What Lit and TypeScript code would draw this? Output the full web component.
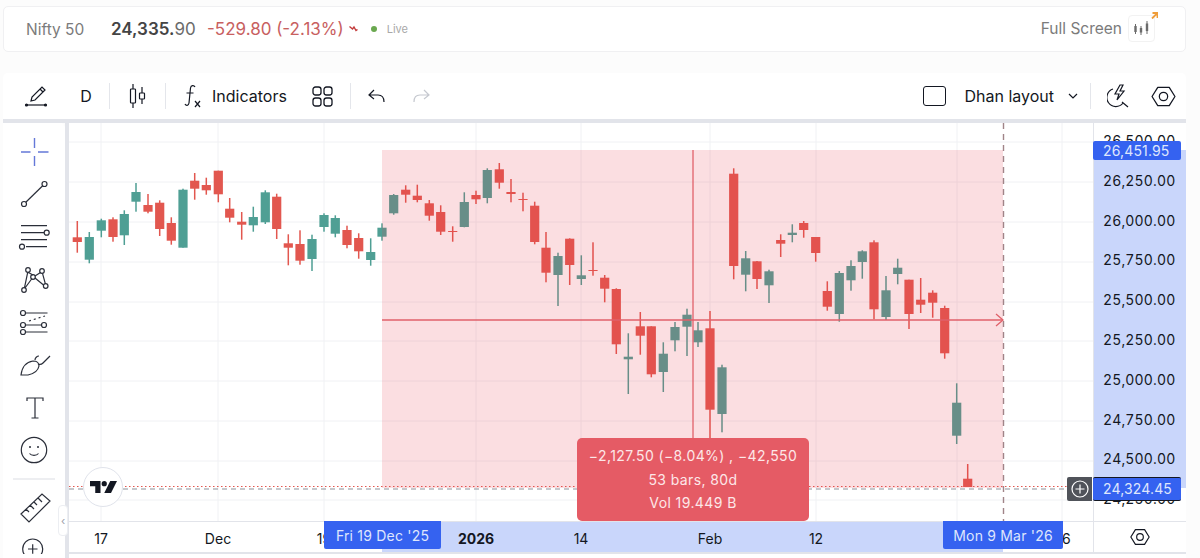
import { LitElement, html, css, svg } from "lit";
import { customElement } from "lit/decorators.js";

// x, wick top, wick bottom, body top, body bottom, green?
const CANDLES: [number, number, number, number, number, number][] = [
  [77.3, 221, 252.7, 237.3, 242, 0], [89.3, 232, 263.3, 237, 259.7, 1], [101.3, 218.7, 237.3, 220.3, 230.7, 1],
  [113, 217.3, 241.7, 219.3, 237, 0], [124.3, 210.3, 245, 214, 235.3, 1], [136, 183, 211.7, 192, 201.7, 1],
  [148, 194, 213.3, 205, 211.7, 0], [159.7, 200.3, 236, 202.7, 229, 0], [171.3, 217.3, 244.7, 223, 240.7, 0],
  [183, 188.7, 247.7, 189.7, 247.7, 1], [194.7, 173, 199.7, 180.7, 188.7, 0], [206.3, 177.7, 194.7, 185, 190.3, 0],
  [218.3, 170.7, 202.3, 170.7, 194.3, 0], [229.7, 198, 222.3, 208.7, 217.7, 0], [241.7, 212, 239.7, 221.7, 224.7, 0],
  [253.3, 206.7, 231.7, 217, 225.3, 1], [265.3, 190.3, 224, 192.3, 222.3, 1], [276.7, 193.7, 239, 196.7, 229, 0],
  [288.3, 234.3, 265.3, 243.3, 247.7, 0], [300, 230.3, 264.7, 244, 260.7, 0], [312, 234.7, 271, 239, 259, 1],
  [324, 213.3, 231.7, 215, 227, 1], [335.3, 215.3, 237.3, 218, 233.7, 1], [347, 225.7, 248.3, 230, 245, 0],
  [358.7, 233.3, 258.7, 238, 251.3, 0], [370.7, 238.3, 265.7, 252, 260, 1], [382, 223.3, 240.7, 227.7, 236.7, 1],
  [393.7, 194, 214.7, 195, 213.3, 1], [405.7, 185.3, 202.7, 189.7, 194.7, 0], [417.3, 184.7, 202.3, 195.7, 200, 0],
  [429.3, 200, 220.7, 203.3, 215.7, 0], [440.7, 205.3, 235, 212, 231.7, 0], [452.7, 226.3, 241.7, 231, 232, 0],
  [464.3, 192.3, 227.3, 202, 227, 1], [476, 190.7, 204, 195, 199.3, 0], [487.3, 168.3, 203.3, 170, 198, 1],
  [499.3, 163, 188.7, 169.3, 182.7, 0], [511, 179, 202.3, 192, 194, 0], [523, 192.7, 211.3, 199, 199.7, 0],
  [534.7, 201.7, 244.3, 205.7, 242, 0], [546, 232, 282.3, 247.7, 272.7, 0], [558, 252.7, 306, 256, 275, 1],
  [569.7, 238.3, 285, 238.7, 265, 0], [581.3, 255.3, 285, 275.3, 279, 1], [593, 242.3, 275.7, 270, 271, 0],
  [604.7, 275, 302.3, 277.7, 288.7, 0], [616.3, 288.3, 354, 289, 344.3, 0], [628.3, 333.3, 394, 356.7, 359.3, 1],
  [640.3, 312, 354.7, 326.3, 335.7, 0], [651.3, 326.3, 377.3, 326.3, 374.3, 0], [663.3, 342.3, 392, 353.7, 372, 1],
  [675, 322, 351.3, 327, 340.3, 1], [687, 308.7, 356, 314.7, 326.7, 1], [698, 322, 347, 330.3, 342.3, 1],
  [710, 311, 438, 328.3, 409.7, 0], [722, 364.7, 432.3, 367.3, 414, 1], [733.7, 168.3, 279.3, 173.7, 266, 0],
  [745.7, 251, 291.3, 258.3, 274.7, 1], [757, 261, 289, 261.3, 279, 0], [769, 269.7, 303, 271.3, 285.3, 1],
  [780.7, 234.3, 257, 240, 243.7, 0], [792.3, 224.3, 242.3, 232.7, 235, 1], [803.7, 221, 237.7, 223, 230, 0],
  [815.7, 237, 261.7, 237, 253, 0], [827.3, 281.3, 310.7, 291, 306.7, 0], [839.3, 271, 321.7, 273, 314, 1],
  [851, 260.3, 290.7, 266, 280.3, 1], [862.3, 250.3, 278.7, 251.3, 262, 1], [874, 240.3, 319.3, 242.3, 309.3, 0],
  [886, 276, 320, 290.3, 317, 1], [897.7, 258.7, 284.3, 267.7, 274, 1], [909, 279.7, 329, 279.7, 314, 0],
  [920.7, 278, 313, 299.7, 304.7, 0], [932.7, 290.3, 317.7, 292.7, 302.7, 0], [944.7, 305.7, 358.7, 308, 353.3, 0],
  [956.7, 383.3, 444, 402.7, 435.7, 1], [967.7, 464, 487, 478.7, 487, 0],
];

const GRID_X = [101, 218, 324, 476, 581, 710, 816, 957, 1062];
const GRID_Y = [142, 182, 222, 262, 302, 341, 381, 421, 461, 500];
const PRICES = ["26,500.00", "26,250.00", "26,000.00", "25,750.00", "25,500.00", "25,250.00", "25,000.00", "24,750.00", "24,500.00", "24,250.00"];
const TICKS: [number, string, boolean][] = [
  [101, "17", false], [218, "Dec", false], [324, "19", false], [476, "2026", true],
  [581, "14", false], [710, "Feb", false], [816, "12", false], [1062, "26", false],
];

const hexagon = (size: number, sw: number) => html`
  <svg width=${size} height=${size} viewBox="0 0 24 24" fill="none" stroke="#131722" stroke-width=${sw}>
    <path d="M6.5 3.2h11L23 12l-5.5 8.8h-11L1 12z" stroke-linejoin="round" />
    <circle cx="12" cy="12" r="4" />
  </svg>
`;

@customElement("app-root")
export class AppRoot extends LitElement {
  static styles = css`
    :host {
      display: block;
      width: 1200px;
      height: 558px;
      overflow: hidden;
      background: #fcfcfc;
      font-family: Inter, "Liberation Sans", sans-serif;
      color: #131722;
    }
    svg {
      display: block;
    }

    .quote {
      display: flex;
      align-items: center;
      box-sizing: border-box;
      height: 46px;
      margin: 6px 14px 0 3px;
      padding: 0 30px 0 22px;
      background: #fff;
      border: 1px solid #f0f0f2;
      border-radius: 5px;
    }
    .name {
      width: 85px;
      font-size: 15.500px;
      color: #7b7b7b;
    }
    .last {
      width: 96px;
      font-size: 17px;
      color: #6b6b6b;
    }
    .last b {
      font-weight: 600;
      color: #444;
    }
    .change {
      font-size: 17px;
      color: #c8605f;
    }
    .trend {
      margin: 0 12px 0 5px;
    }
    .dot {
      width: 6px;
      height: 6px;
      border-radius: 50%;
      background: #6aa84f;
      margin-right: 10px;
    }
    .live {
      font-size: 11px;
      color: #a8a8a8;
    }
    .full {
      margin-left: auto;
      margin-bottom: 2px;
      display: flex;
      align-items: center;
      gap: 6px;
      font-size: 15.500px;
      color: #7b7b7b;
    }
    .full-icon {
      position: relative;
      display: flex;
      align-items: center;
      justify-content: center;
      box-sizing: border-box;
      width: 27px;
      height: 27px;
      border: 1px solid #f2f2f2;
      border-radius: 4px;
    }
    .full-arrow {
      position: absolute;
      top: -4px;
      right: -4px;
    }

    .toolbar {
      display: flex;
      align-items: center;
      box-sizing: border-box;
      height: 46px;
      margin: 21px 14px 0 3px;
      background: #fff;
      border-radius: 5px 5px 0 0;
    }
    .tool {
      display: flex;
      align-items: center;
      justify-content: center;
      flex: none;
    }
    .sep {
      flex: none;
      width: 1px;
      height: 26px;
      background: #e4e6eb;
    }
    .interval {
      width: 18px;
      font-size: 16px;
      text-align: center;
    }
    .label {
      font-size: 16px;
    }
    .square {
      box-sizing: border-box;
      width: 23px;
      height: 20px;
      border: 1.300px solid #131722;
      border-radius: 3px;
      margin-left: auto;
    }

    .workspace {
      display: flex;
      height: 435px;
      margin: 0 14px 0 3px;
      border-top: 4px solid #e2e4ea;
    }
    .rail {
      flex: none;
      position: relative;
      width: 62px;
      background: #fff;
      border-radius: 0 5px 0 0;
    }
    .handle {
      position: absolute;
      left: 55px;
      top: 382px;
      display: flex;
      align-items: center;
      justify-content: center;
      box-sizing: border-box;
      width: 10px;
      height: 31px;
      background: #fff;
      border: 1px solid #eceef2;
      border-radius: 4px;
      font-size: 11px;
      color: #9a9ea8;
      z-index: 2;
    }
    .gutter {
      flex: none;
      width: 4px;
      background: #e2e4ea;
    }
    .chart {
      flex: 1;
      display: grid;
      grid-template-columns: 1024px 93px;
      grid-template-rows: 398px 33px;
      position: relative;
      background: #fff;
    }
    .plot {
      position: relative;
      overflow: hidden;
    }
    .brand {
      position: absolute;
      left: 14px;
      top: 344px;
      display: flex;
      align-items: center;
      justify-content: center;
      box-sizing: border-box;
      width: 40px;
      height: 40px;
      background: #fff;
      border: 1px solid #e0e3eb;
      border-radius: 50%;
    }
    .prices {
      position: relative;
      border-left: 1px solid #e2e4ea;
      overflow: visible;
    }
    .prices-range {
      position: absolute;
      left: 0;
      right: 0;
      top: 27px;
      height: 338px;
      background: #c9d6fb;
    }
    .price {
      position: absolute;
      left: 9px;
      font-size: 14px;
      line-height: 20px;
      letter-spacing: 0.150px;
      font-variant-numeric: tabular-nums;
    }
    .times {
      position: relative;
      border-top: 1px solid #e2e4ea;
      border-bottom: 2px solid #e2e4ea;
      overflow: hidden;
    }
    .times-range {
      position: absolute;
      left: 313px;
      width: 621px;
      top: 0;
      bottom: 0;
      background: #c9d6fb;
    }
    .tick {
      position: absolute;
      top: 0;
      width: 60px;
      margin-left: -30px;
      text-align: center;
      font-size: 14px;
      line-height: 33px;
    }
    .tick.bold {
      font-weight: 700;
    }
    .corner {
      display: flex;
      align-items: center;
      justify-content: center;
      border-top: 1px solid #e2e4ea;
      border-bottom: 2px solid #e2e4ea;
      border-left: 1px solid #e2e4ea;
    }

    .date-tag {
      position: absolute;
      top: 398px;
      height: 28px;
      display: flex;
      align-items: center;
      justify-content: center;
      background: #3562f0;
      color: #dfe6fd;
      font-size: 14px;
      letter-spacing: 0.200px;
      border-radius: 0 0 2px 2px;
    }
    .price-tag {
      position: absolute;
      left: 1024px;
      width: 88px;
      box-sizing: border-box;
      padding-left: 10px;
      background: #3562f0;
      color: #dfe6fd;
      font-size: 14px;
      letter-spacing: 0.150px;
      border-radius: 2px;
    }
    .tag-top {
      top: 18px;
      height: 19px;
      line-height: 19px;
    }
    .tag-last {
      top: 354px;
      height: 24px;
      line-height: 22px;
      border-top: 1.500px solid #131722;
      border-bottom: 1.500px solid #131722;
    }
    .plus {
      position: absolute;
      left: 998px;
      top: 354px;
      width: 25px;
      height: 24px;
      display: flex;
      align-items: center;
      justify-content: center;
      background: #50535a;
      border-radius: 2px 0 0 2px;
    }
    .tip {
      position: absolute;
      left: 508px;
      top: 315px;
      width: 232px;
      height: 83px;
      display: flex;
      flex-direction: column;
      align-items: center;
      justify-content: center;
      gap: 3.500px;
      background: #e55b65;
      color: #fde7e8;
      border-radius: 5px;
      font-size: 14px;
      line-height: 20px;
      letter-spacing: 0.400px;
    }
  `;

  private renderCandles() {
    return CANDLES.map(([x, wt, wb, bt, bb, up]) => {
      const color = up ? "#4f9f94" : "#e2574f";
      return svg`
        <rect x=${x - 0.75} y=${wt} width="1.5" height=${wb - wt} fill=${color} />
        <rect x=${x - 4.6} y=${bt} width="9.2" height=${Math.max(bb - bt, 1)} fill=${color} />
      `;
    });
  }

  private renderPlot() {
    return html`
      <svg width="1024" height="398" viewBox="69 123 1024 398">
        ${GRID_X.map((x) => svg`<line x1=${x} x2=${x} y1="123" y2="521" stroke="#f0f1f4" />`)}
        ${GRID_Y.map((y) => svg`<line x1="69" x2="1093" y1=${y} y2=${y} stroke="#f0f1f4" />`)}
        ${this.renderCandles()}
        <line x1="69" x2="1067" y1="489" y2="489" stroke="#8d9199" stroke-dasharray="5 4" />
        <line x1="69" x2="1067" y1="486.5" y2="486.5" stroke="#e2574f" stroke-dasharray="1.5 2.5" />
        <rect x="382" y="150" width="621" height="338" fill="rgb(234,60,75)" fill-opacity="0.17" />
        <line x1="1003.5" x2="1003.5" y1="123" y2="521" stroke="#a08488" stroke-width="1.4" stroke-dasharray="6 5" />
        <line x1="693" x2="693" y1="150" y2="438" stroke="#e0616a" stroke-width="1.3" />
        <line x1="382" x2="1003" y1="320" y2="320" stroke="#e0616a" stroke-width="1.3" />
        <path d="M996 314l7 6-7 6" fill="none" stroke="#e0616a" stroke-width="1.3" />
      </svg>
      <div class="brand">
        <svg width="27" height="14" viewBox="0 0 36 18" fill="#131722">
          <path d="M0 1h14v16H7V8H0z" />
          <circle cx="19" cy="4.5" r="3.5" />
          <path d="M27 1h9l-8 16h-9z" />
        </svg>
      </div>
    `;
  }

  private renderRail() {
    return html`
      <div class="rail">
        <svg width="62" height="431" viewBox="0 123 62 431" fill="none" stroke="#2a2e39" stroke-width="1.2">
          <path d="M21 152h9.500M38 152h10.500M34.500 138v10M34.500 156v10" stroke="#6478d8" stroke-width="1.4" transform="translate(-3 0)" />
          <circle cx="21" cy="204" r="2.500" />
          <circle cx="41.500" cy="184" r="2.500" />
          <path d="M22.800 202.200L39.700 185.800" />
          <path d="M18 225.700h26M18 232.700h23M18 239.700h26M23 246.700h21" />
          <circle cx="43.700" cy="232.700" r="2.500" />
          <circle cx="19" cy="246.700" r="2.500" />
          <circle cx="25" cy="270" r="2.300" />
          <circle cx="39" cy="271" r="2.300" />
          <circle cx="30" cy="277" r="2.300" />
          <circle cx="21" cy="290" r="2.300" />
          <circle cx="42.700" cy="286" r="2.300" />
          <path d="M25 272.300L30 275M24.700 272.300L21.500 287.700M22 288L29 278.500M32 276L37.500 272.500M39.500 273.300L42.300 283.700M32 278L40.500 285" />
          <circle cx="20" cy="313" r="2.500" />
          <circle cx="20" cy="325" r="2.500" />
          <circle cx="41" cy="325" r="2.500" />
          <circle cx="20" cy="332" r="2.500" />
          <path d="M22.500 313h22M22.500 325h16M22.500 332h22" />
          <path d="M26 321l16-5" stroke-dasharray="2 3" />
          <path d="M18 375c1-8 5-13 12-14 4 0 6 2 6 5-1 5-6 8-11 9zM35 364c2 1 4 0 5-1l7-7M32 360c0-2 2-4 4-4" />
          <path d="M24 401v-3h16v3M32 398v20M28.500 418h7" />
          <circle cx="31" cy="450" r="12.700" />
          <circle cx="27" cy="447" r="1" fill="#2a2e39" stroke="none" />
          <circle cx="35" cy="447" r="1" fill="#2a2e39" stroke="none" />
          <path d="M26.500 453.500c2 2.500 7 2.500 9 0" />
          <path d="M10 479h42" stroke="#dcdee4" />
          <path d="M18 514l21-20 8 7-21 21zM23 509l3 3M27 505l4 4M31 502l3 3M35 498l4 4" />
          <circle cx="29.700" cy="549" r="10" />
          <path d="M25 549h9.500M29.700 544.300v9.500M37 556l3 3" />
        </svg>
        <div class="handle">‹</div>
      </div>
    `;
  }

  render() {
    return html`
      <div class="quote">
        <span class="name">Nifty 50</span>
        <span class="last"><b>24,335.</b>90</span>
        <span class="change">-529.80 (-2.13%)</span>
        <svg class="trend" width="10" height="8" viewBox="0 0 10 8" fill="none" stroke="#c23b3b" stroke-width="1.4">
          <path d="M0.500 1.500L3.500 4l1.500-2 2 3.500 1.500-1" />
        </svg>
        <span class="dot"></span>
        <span class="live">Live</span>
        <div class="full">
          Full Screen
          <div class="full-icon">
            <svg width="17" height="16" viewBox="0 0 17 16" stroke="#6b6b6b" fill="#6b6b6b">
              <path d="M2.500 4v10M8 6v9M14 1v13" stroke-width="1" />
              <rect x="1.300" y="6" width="2.400" height="6" stroke="none" />
              <rect x="6.800" y="8" width="2.400" height="4.500" stroke="none" />
              <rect x="12.800" y="3.500" width="2.400" height="7.500" stroke="none" />
            </svg>
            <svg class="full-arrow" width="7" height="7" viewBox="0 0 7 7" fill="none" stroke="#ef9d3a" stroke-width="1.800">
              <path d="M1 6.500L6 1.500M1.500 1H6.500V6" />
            </svg>
          </div>
        </div>
      </div>

      <div class="toolbar">
        <svg class="tool" style="margin-left:21px" width="24" height="24" viewBox="0 0 24 24" fill="none" stroke="#131722" stroke-width="1.200">
          <path d="M7 17l1-4L18 3l3 3L11 16zM16 5l3 3" />
          <path d="M2.500 21h19" />
          <circle cx="2.500" cy="21" r="1" fill="#131722" />
          <circle cx="21.500" cy="21" r="1" fill="#131722" />
        </svg>
        <span class="tool interval" style="margin-left:29px">D</span>
        <span class="sep" style="margin-left:14px"></span>
        <svg class="tool" style="margin-left:18px" width="20" height="26" viewBox="0 0 20 26" fill="none" stroke="#131722" stroke-width="1.200">
          <path d="M5 1v5M5 20v5M14 4v6M14 16v5" />
          <rect x="2.500" y="6" width="5" height="14" rx="0.800" />
          <rect x="11.500" y="10" width="5" height="6" rx="0.800" />
        </svg>
        <span class="sep" style="margin-left:17px"></span>
        <svg class="tool" style="margin-left:18px" width="20" height="26" viewBox="0 0 20 26" fill="none" stroke="#131722" stroke-width="1.200">
          <path d="M11 4c-1-2-4-2-4.500 1L5 20c-.5 3-3 3-4 1M2.500 10h7M11 18l5 6M16 18l-5 6" />
        </svg>
        <span class="tool label" style="margin-left:8px">Indicators</span>
        <svg class="tool" style="margin-left:25px" width="21" height="21" viewBox="0 0 21 21" fill="none" stroke="#131722" stroke-width="1.300">
          <rect x="1" y="1" width="8" height="8" rx="2.500" />
          <rect x="12" y="1" width="8" height="8" rx="2.500" />
          <rect x="1" y="12" width="8" height="8" rx="2.500" />
          <rect x="12" y="12" width="8" height="8" rx="2.500" />
        </svg>
        <span class="sep" style="margin-left:17px"></span>
        <svg class="tool" style="margin-left:17px" width="18" height="14" viewBox="0 0 18 14" fill="none" stroke="#131722" stroke-width="1.200">
          <path d="M6 1L1 6l5 4M1 6h9c4 0 6 2 6 7" />
        </svg>
        <svg class="tool" style="margin-left:26px" width="18" height="14" viewBox="0 0 18 14" fill="none" stroke="#c5c8cf" stroke-width="1.200">
          <path d="M12 1l5 5-5 4M17 6H8c-4 0-6 2-6 7" />
        </svg>
        <span class="square"></span>
        <span class="tool label" style="margin-left:18px">Dhan layout</span>
        <svg class="tool" style="margin-left:14px" width="10" height="6" viewBox="0 0 10 6" fill="none" stroke="#131722" stroke-width="1.200">
          <path d="M1 1l4 4 4-4" />
        </svg>
        <span class="sep" style="margin-left:12px"></span>
        <svg class="tool" style="margin-left:16px" width="23" height="24" viewBox="0 0 23 24" fill="none" stroke="#131722" stroke-width="1.200">
          <path d="M6 5a9 9 0 1 0 10 14M15 18l6 5" />
          <path d="M13 1L8 10h4l-2 6 7-9h-4l3-6z" />
        </svg>
        <span class="tool" style="margin-left:21px;margin-right:10px">${hexagon(25, 1.2)}</span>
      </div>

      <div class="workspace">
        ${this.renderRail()}
        <div class="gutter"></div>
        <div class="chart">
          <div class="plot">${this.renderPlot()}</div>
          <div class="prices">
            <div class="prices-range"></div>
            ${PRICES.map((p, i) => html`<span class="price" style="top:${8 + i * 39.8}px">${p}</span>`)}
          </div>
          <div class="times">
            <div class="times-range"></div>
            ${TICKS.map(([x, t, bold]) => html`<span class="tick ${bold ? "bold" : ""}" style="left:${x - 69}px">${t}</span>`)}
          </div>
          <div class="corner">${hexagon(20, 1.4)}</div>

          <div class="tip">
            <span>−2,127.50 (−8.04%) , −42,550</span>
            <span>53 bars, 80d</span>
            <span>Vol 19.449 B</span>
          </div>
          <div class="date-tag" style="left:255px;width:117px">Fri 19 Dec '25</div>
          <div class="date-tag" style="left:874px;width:120px">Mon 9 Mar '26</div>
          <div class="price-tag tag-top">26,451.95</div>
          <div class="price-tag tag-last">24,324.45</div>
          <div class="plus">
            <svg width="18" height="18" viewBox="0 0 18 18" fill="none" stroke="#fff" stroke-width="1.200">
              <circle cx="9" cy="9" r="8" />
              <path d="M4.500 9h9M9 4.500v9" />
            </svg>
          </div>
        </div>
      </div>
    `;
  }
}
